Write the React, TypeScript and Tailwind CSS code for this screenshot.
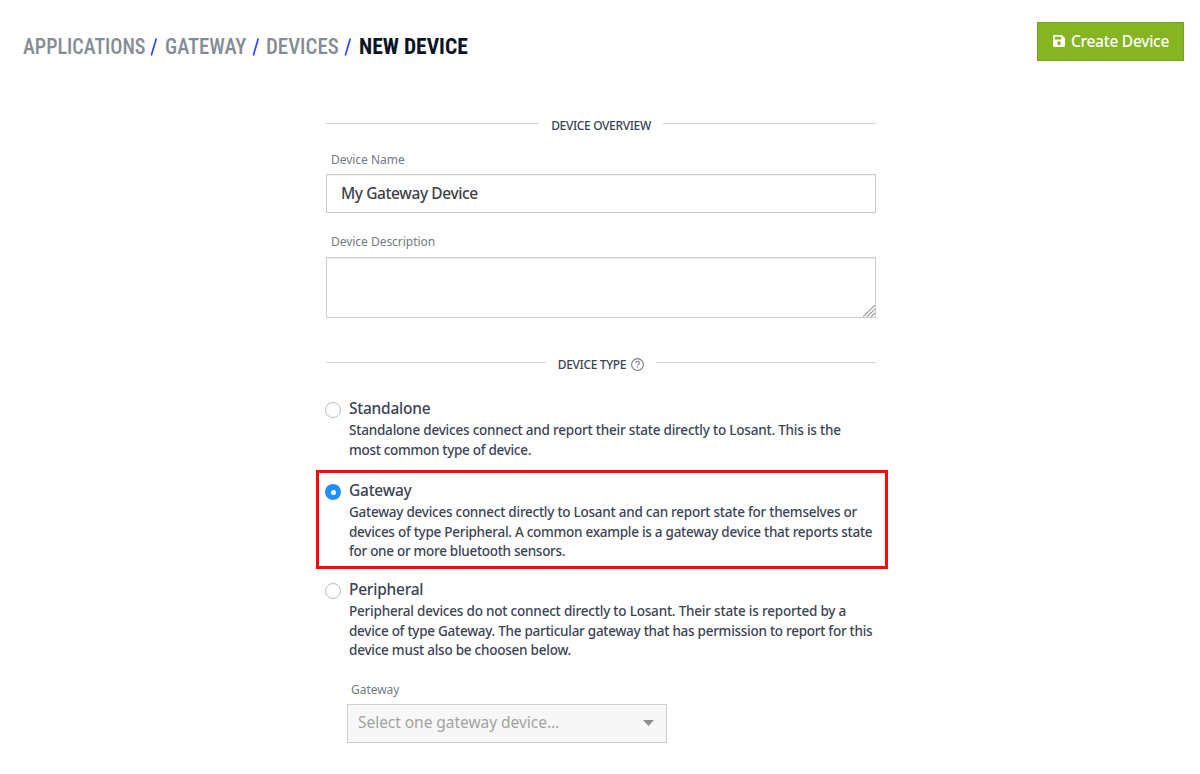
import type { ReactNode } from 'react'

function Slash() {
  return (
    <svg className="h-[19px] w-[8px] shrink-0" viewBox="0 0 8 19" fill="none">
      <path d="M1.300 17.500 6.300 .5" stroke="#2b48ff" strokeWidth="1.700" />
    </svg>
  )
}

function Crumb({ width, scale, children }: { width: string; scale: string; children: ReactNode }) {
  return (
    <span className={`${width} whitespace-nowrap`}>
      <span className={`inline-block origin-left ${scale}`}>{children}</span>
    </span>
  )
}

function Divider({ icon, children }: { icon?: ReactNode; children: ReactNode }) {
  return (
    <div className="flex h-5 items-center gap-3">
      <span className="mb-[3px] h-px flex-1 bg-[#cfd1d3]" />
      <span className="flex items-center gap-[5px] text-[12px] font-medium tracking-[-0.36px] text-[#3c4454]">
        <span className="pt-[2px]">{children}</span>
        {icon}
      </span>
      <span className="mb-[3px] h-px flex-1 bg-[#cfd1d3]" />
    </div>
  )
}

function Label({ children }: { children: ReactNode }) {
  return <div className="h-5 text-[12px] leading-[22px] tracking-[-0.03px] text-[#737a84]">{children}</div>
}

function Radio({ checked }: { checked?: boolean }) {
  return checked ? (
    <span className="mt-[5px] flex size-4 shrink-0 items-center justify-center rounded-full bg-[#1f8ffb]">
      <span className="size-[5px] rounded-full bg-white" />
    </span>
  ) : (
    <span className="mt-[5px] size-4 shrink-0 rounded-full border border-[#bdbdbd] bg-white" />
  )
}

function Option({ title, checked, children }: { title: string; checked?: boolean; children: ReactNode }) {
  return (
    <div className="-ml-px flex gap-2 text-[#3c4454]">
      <Radio checked={checked} />
      <div className="whitespace-nowrap font-medium">
        <div className="h-6 text-[15.5px] leading-[23px] tracking-[-0.24px]">{title}</div>
        <div className="text-[13.5px] leading-[19.6px] tracking-[-0.25px]">{children}</div>
      </div>
    </div>
  )
}

export default function App() {
  return (
    <div className="h-[774px] w-[1200px] overflow-hidden bg-white font-['Noto_Sans',sans-serif]">
      <header className="flex h-[115px] items-start justify-between pl-[23px] pr-4 pt-[22px]">
        <nav className="mt-[11px] flex h-7 items-center font-['Roboto',sans-serif] text-[22px] font-medium leading-7 text-[#858c94] [font-stretch:75%]">
          <Crumb width="w-[127px]" scale="scale-x-[0.915]">APPLICATIONS</Crumb>
          <Slash />
          <span className="w-[7px]" />
          <Crumb width="w-[87px]" scale="scale-x-[0.94]">GATEWAY</Crumb>
          <Slash />
          <span className="w-[6px]" />
          <Crumb width="w-[78px]" scale="scale-x-[0.95]">DEVICES</Crumb>
          <Slash />
          <span className="w-[7px]" />
          <span className="font-bold text-[#0a1426]">
            <Crumb width="w-[110px]" scale="scale-x-[0.98]">NEW DEVICE</Crumb>
          </span>
        </nav>
        <button className="flex h-[39px] w-[147px] items-center justify-center gap-[6px] border border-[#74a01f] bg-[#86b422] pl-px text-[15.5px] font-medium tracking-[-0.25px] text-white">
          <svg className="mb-[2px] size-3" viewBox="0 0 12 12" fill="currentColor" fillRule="evenodd">
            <path d="M1.200 0h7.600L12 3.200v7.600c0 .7-.5 1.200-1.200 1.200H1.200C.5 12 0 11.500 0 10.800V1.200C0 .5.500 0 1.200 0ZM1.800 1.800v2.700h6.400V1.800ZM6 6.300a1.900 1.900 0 1 0 0 3.800 1.900 1.900 0 0 0 0-3.800Z" />
          </svg>
          <span className="pt-px">Create Device</span>
        </button>
      </header>

      <main className="ml-[326px] w-[550px]">
        <Divider>DEVICE OVERVIEW</Divider>

        <div className="mt-[14px] pl-[5px]">
          <Label>Device Name</Label>
        </div>
        <div className="mt-[5px] flex h-[39px] items-center border border-[#cbcccd] pl-[14px] text-[15.5px] font-medium tracking-[-0.4px] text-[#3f4147] shadow-[inset_0_1px_1px_rgba(0,0,0,0.06)]">
          My Gateway Device
        </div>

        <div className="mt-[18px] pl-[5px]">
          <Label>Device Description</Label>
        </div>
        <div className="mt-[6px] flex h-[61px] items-end justify-end border border-[#cbcccd] shadow-[inset_0_1px_1px_rgba(0,0,0,0.06)]">
          <svg className="size-3" viewBox="0 0 12 12" fill="none" stroke="#999ca0" strokeWidth="1.200">
            <path d="M0 12 12 0M4 12l8-8M8 12l4-4" />
          </svg>
        </div>

        <div className="mt-9">
          <Divider
            icon={
              <svg className="size-[13px]" viewBox="0 0 13 13" fill="none" stroke="#747a85">
                <circle cx="6.500" cy="6.500" r="5.900" strokeWidth="1.100" />
                <path d="M4.700 5.100c0-1.100.8-1.800 1.800-1.800s1.800.7 1.800 1.600c0 1.300-1.700 1.300-1.700 2.700M6.600 8.600v1.200" strokeWidth="1.100" />
              </svg>
            }
          >
            DEVICE TYPE
          </Divider>
        </div>

        <div className="mt-[23px]">
          <Option title="Standalone">
            <div className="tracking-[-0.206px]">Standalone devices connect and report their state directly to Losant. This is the</div>
            <div className="tracking-[-0.3px]">most common type of device.</div>
          </Option>
        </div>

        <div className="-ml-[10px] mt-[10px] h-[99px] w-[572px] border-[3px] border-[#fb0a0a] pl-[7px] pt-[6px]">
          <Option title="Gateway" checked>
            <div>Gateway devices connect directly to Losant and can report state for themselves or</div>
            <div className="tracking-[-0.27px]">devices of type Peripheral. A common example is a gateway device that reports state</div>
            <div className="tracking-[-0.29px]">for one or more bluetooth sensors.</div>
          </Option>
        </div>

        <div className="mt-[9px]">
          <Option title="Peripheral">
            <div className="tracking-[-0.2px]">Peripheral devices do not connect directly to Losant. Their state is reported by a</div>
            <div className="tracking-[-0.266px]">device of type Gateway. The particular gateway that has permission to report for this</div>
            <div className="tracking-[-0.235px]">device must also be choosen below.</div>
          </Option>
        </div>

        <div className="ml-[21px] mt-[18px] w-[320px]">
          <div className="pl-1">
            <Label>Gateway</Label>
          </div>
          <div className="mt-[5px] flex h-[39px] items-center justify-between border border-[#cbcccd] bg-[#f7f7f7] pl-[10px] pr-3 text-[15.5px] tracking-[-0.04px] text-[#a3a3a3]">
            <span className="pb-[2px]">Select one gateway device...</span>
            <svg className="h-[6px] w-[11px]" viewBox="0 0 11 6" fill="#8f8f8f">
              <path d="M0 0h11L5.500 6Z" />
            </svg>
          </div>
        </div>
      </main>
    </div>
  )
}
